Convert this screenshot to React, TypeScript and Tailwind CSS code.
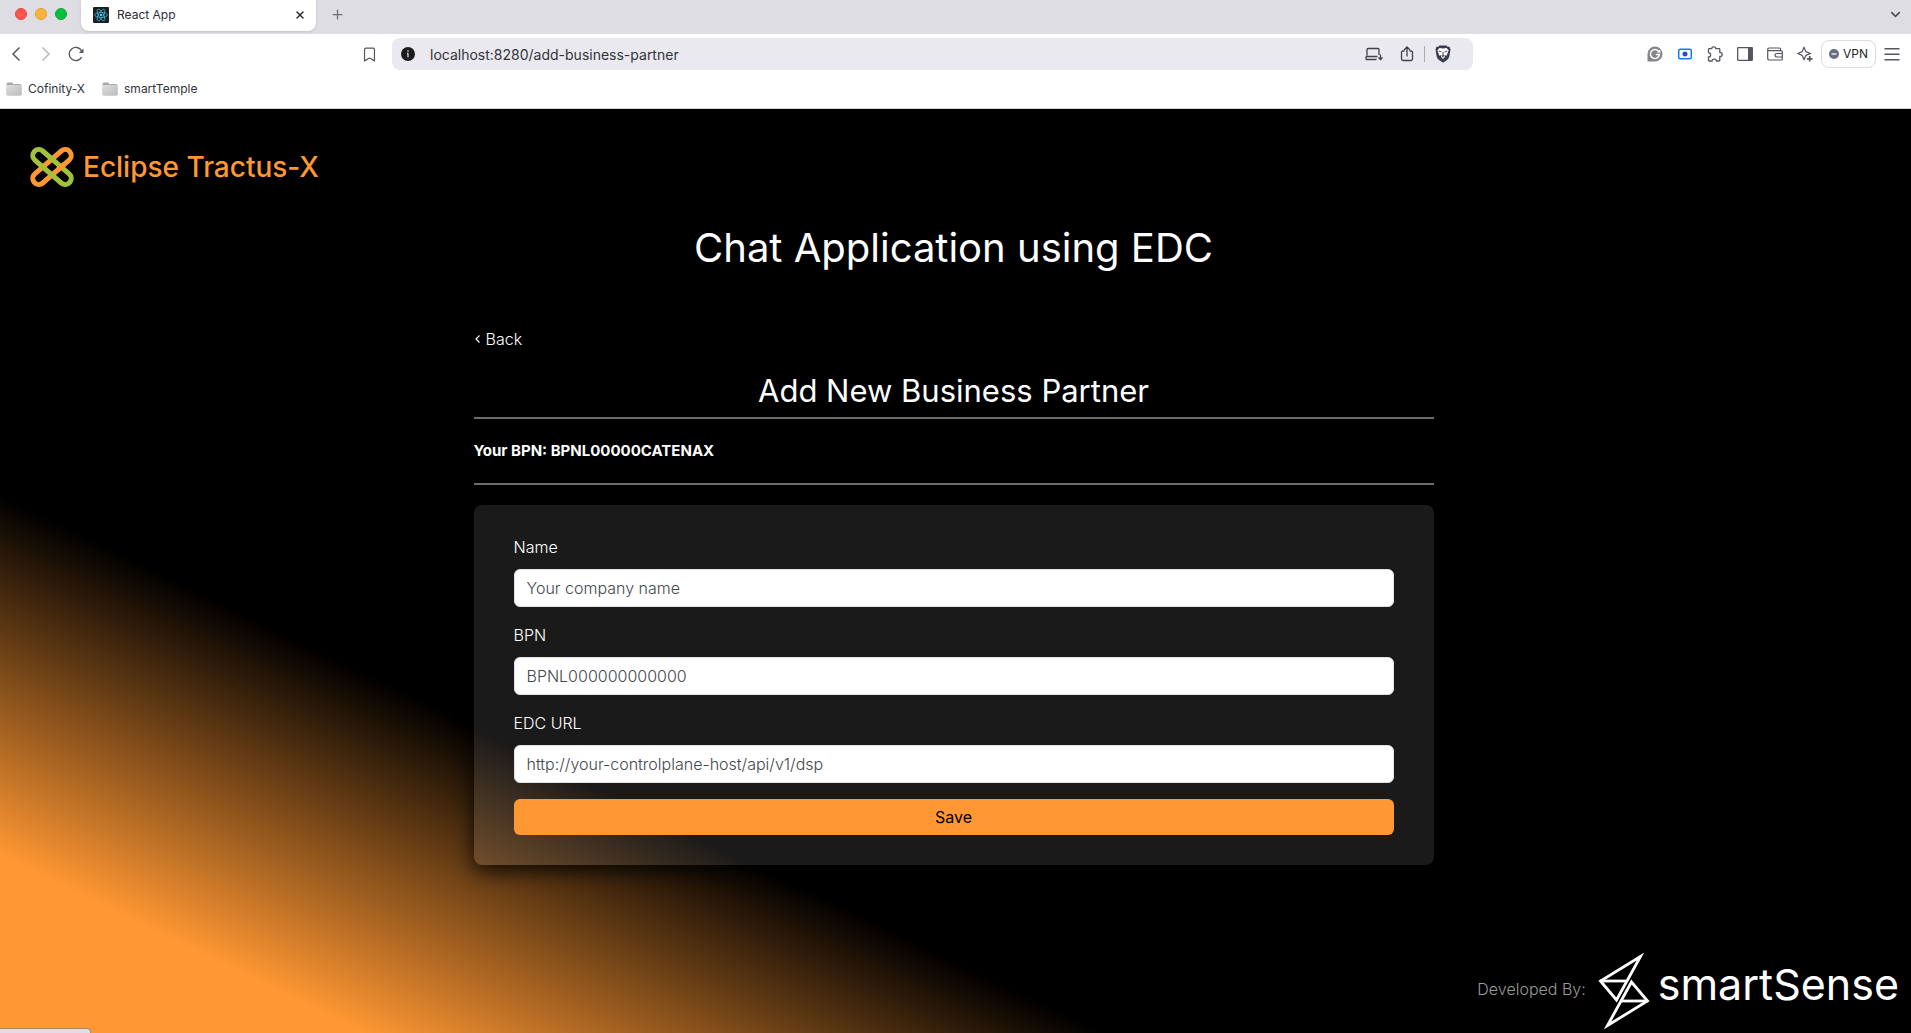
import React from "react";
import { Bookmark, ChevronDown, Plus, X } from "lucide-react";

function ReactFavicon() {
  return (
    <svg width="16" height="16" viewBox="0 0 16 16" aria-hidden="true">
      <rect width="16" height="16" rx="1" fill="#1c1f24" />
      <g fill="none" stroke="#35b4cf" strokeWidth="0.8">
        <ellipse cx="8" cy="8" rx="6.4" ry="2.5" />
        <ellipse cx="8" cy="8" rx="6.4" ry="2.5" transform="rotate(60 8 8)" />
        <ellipse cx="8" cy="8" rx="6.4" ry="2.5" transform="rotate(120 8 8)" />
      </g>
      <circle cx="8" cy="8" r="1.3" fill="#4fd0ea" />
    </svg>
  );
}

function FolderIcon() {
  return (
    <svg width="16" height="14" viewBox="0 0 16 14" aria-hidden="true">
      <defs>
        <linearGradient id="folder" x1="0" y1="0" x2="1" y2="1">
          <stop offset="0" stopColor="#dedede" />
          <stop offset="1" stopColor="#bdbdbd" />
        </linearGradient>
      </defs>
      <path d="M0.5 2 Q0.5 0.5 2 0.5 H6 L7.5 2 H14 Q15.5 2 15.5 3.5 V12 Q15.5 13.5 14 13.5 H2 Q0.5 13.5 0.5 12 Z" fill="#a9a9a9" />
      <path d="M0.5 3 H15.5 V12 Q15.5 13 14.5 13 H1.5 Q0.5 13 0.5 12 Z" fill="url(#folder)" />
    </svg>
  );
}

function TabStrip() {
  return (
    <div className="flex h-[34px] items-start justify-between bg-[#dedde3]">
      <div className="flex items-start">
        <div className="flex h-7 w-[81px] items-center gap-2 pl-[15px]">
          <span className="size-3 rounded-full border border-[#e2463f] bg-[#ff5550]" />
          <span className="size-3 rounded-full border border-[#e09a2c] bg-[#ffb23c]" />
          <span className="size-3 rounded-full border border-[#0ea52f] bg-[#05c03f]" />
        </div>
        <div className="flex h-[31px] w-[235px] items-center rounded-b-lg bg-white pr-2.5 pb-0.5 pl-3 shadow-sm">
          <ReactFavicon />
          <span className="ml-2 flex-1 text-[12px] text-[#2d2d33]">React App</span>
          <button aria-label="Close tab" className="text-[#2d2d33]">
            <X size={12} strokeWidth={3} />
          </button>
        </div>
        <button aria-label="New tab" className="flex h-7 w-[42px] items-center justify-center text-[#6d6d74]">
          <Plus size={15} strokeWidth={2} />
        </button>
      </div>
      <button aria-label="Search tabs" className="flex h-7 w-8 items-center justify-center text-[#4a4a52]">
        <ChevronDown size={15} strokeWidth={2.4} />
      </button>
    </div>
  );
}

function Toolbar() {
  return (
    <div className="flex h-10 items-center text-[#55565f]">
      <div className="flex w-[380px] items-center">
        <button aria-label="Back" className="ml-2">
          <svg width="16" height="16" viewBox="0 0 16 16" fill="none" stroke="currentColor" strokeWidth="1.5">
            <path d="M11.5 1.5 5 8l6.5 6.5" />
          </svg>
        </button>
        <button aria-label="Forward" className="ml-3.5 text-[#b7b7bd]">
          <svg width="16" height="16" viewBox="0 0 16 16" fill="none" stroke="currentColor" strokeWidth="1.5">
            <path d="M4.5 1.5 11 8l-6.5 6.5" />
          </svg>
        </button>
        <button aria-label="Reload" className="ml-3.5">
          <svg width="16" height="16" viewBox="0 0 16 16" fill="none" stroke="currentColor" strokeWidth="1.4">
            <path d="M13.6 11.2A6.6 6.6 0 1 1 13.6 4.800" />
            <path d="M15.5 2.5V7H10.8Z" fill="currentColor" stroke="none" />
          </svg>
        </button>
        <button aria-label="Bookmark this page" className="mr-0.5 ml-auto">
          <Bookmark size={17} strokeWidth={1.7} />
        </button>
      </div>
      <div className="ml-3 flex h-8 w-[1081px] items-center rounded-lg bg-[#eae9ef] pr-[21px] pl-[9px]">
        <svg width="14" height="14" viewBox="0 0 14 14" aria-hidden="true">
          <circle cx="7" cy="7" r="7" fill="#1c1c1f" />
          <path d="M7 6.2V10.5M6 6.5H7.2M7 3.3V4.7" stroke="#d8d8dc" strokeWidth="1.3" />
        </svg>
        <input
          aria-label="Address"
          defaultValue="localhost:8280/add-business-partner"
          className="ml-[15px] min-w-0 flex-1 bg-transparent text-[14px] text-[#333338] outline-none"
        />
        <button aria-label="Install app">
          <svg width="18" height="16" viewBox="0 0 18 16" fill="none" stroke="#3f414b" strokeWidth="1.3">
            <path d="M2 9.5V3.5Q2 2.5 3 2.5H13Q14 2.5 14 3.5V9M1 10.5H12.5M1 13.5H11.5M1 10.5V13.5" />
            <path d="M15.5 8.5V13M13.5 11.5l2 2 2-2" />
          </svg>
        </button>
        <button aria-label="Share" className="ml-4">
          <svg width="16" height="16" viewBox="0 0 16 16" fill="none" stroke="#3f414b" strokeWidth="1.3">
            <path d="M5.5 5H4Q2.500 5 2.500 6.500V13Q2.500 14.500 4 14.500H12Q13.500 14.500 13.500 13V6.500Q13.500 5 12 5H10.500M8 10.500V1.200M5 4l3-3 3 3" />
          </svg>
        </button>
        <span className="mx-[9px] h-4 w-px bg-[#aaaab2]" />
        <button aria-label="Shields">
          <svg width="18" height="18" viewBox="0 0 18 18">
            <path d="M5.500 0.500H12.500L13.700 1.800 15.500 1.700 16.500 4.500 15.300 11.500Q14.800 13.600 13 15L9 17.800 5 15Q3.200 13.600 2.700 11.500L1.500 4.500 2.500 1.700 4.300 1.800Z" fill="#3a3b4d" />
            <path d="M5.500 3 9 3.500 12.500 3 14.700 5.200 13.600 8 12.600 10.800 10.500 10 10.900 12.300 9 13.900 7.100 12.300 7.500 10 5.400 10.800 4.400 8 3.300 5.200Z" fill="#fff" />
            <path d="M4.700 6 7.500 7M13.300 6 10.500 7M9 7V10.300M7.800 10.300H10.200M7.600 12.300 9 11.500 10.400 12.300" stroke="#3a3b4d" strokeWidth="0.9" fill="none" />
          </svg>
        </button>
      </div>
      <div className="ml-auto flex items-center gap-3.5 pr-[11px]">
        <button aria-label="Grammar">
          <svg width="16" height="16" viewBox="0 0 16 16">
            <path d="M0.500 15.500V8A7.500 7.500 0 1 1 8 15.500Z" fill="#85858a" />
            <path d="M11.300 4.900A4.500 4.500 0 1 0 12.400 8.600H8.800M12.600 4V6H10.500" fill="none" stroke="#fff" strokeWidth="1.5" />
          </svg>
        </button>
        <button aria-label="Recorder">
          <svg width="16" height="16" viewBox="0 0 16 16">
            <rect x="1.700" y="3.200" width="12.600" height="9.600" rx="1.500" fill="#fff" stroke="#1478f2" strokeWidth="1.5" />
            <circle cx="8" cy="8" r="2.500" fill="#3a45cf" />
          </svg>
        </button>
        <button aria-label="Extensions">
          <svg width="16" height="16" viewBox="0 0 16 16" fill="none" stroke="currentColor" strokeWidth="1.3" strokeLinejoin="round">
            <path d="M1.500 3.500Q1.500 2.700 2.300 2.700H4.800C4.300 0.200 9.200 0.200 8.700 2.700H12Q12.800 2.700 12.800 3.500V6.500C16 6 16 11 12.800 10.500V14.200Q12.800 15 12 15H9.300C9.500 12.400 5 12.400 5.200 15H2.300Q1.500 15 1.500 14.200V11C4.300 11 4.300 6.600 1.500 6.600Z" />
          </svg>
        </button>
        <button aria-label="Sidebar">
          <svg width="16" height="16" viewBox="0 0 16 16">
            <rect x="0.700" y="1.700" width="14.600" height="12.600" rx="0.500" fill="none" stroke="currentColor" strokeWidth="1.3" />
            <path d="M11 1.500H15.500V14.500H11Z" fill="currentColor" />
          </svg>
        </button>
        <button aria-label="Wallet">
          <svg width="16" height="16" viewBox="0 0 16 16" fill="none" stroke="currentColor" strokeWidth="1.2">
            <path d="M0.700 3.500Q0.700 2 2.200 2H12.500Q13.500 2 13.500 3V4.500M0.700 3.500Q0.700 4.700 2 4.700H14Q15.300 4.700 15.300 6V12.700Q15.300 14 14 14H2.500Q0.700 14 0.700 12.500Z" />
            <path d="M15 7.500H10Q8 7.500 8 9.200T10 11H15" />
          </svg>
        </button>
        <button aria-label="Assistant">
          <svg width="16" height="16" viewBox="0 0 16 16" fill="none" stroke="currentColor" strokeWidth="1.2">
            <path d="M7 1.200 8.800 5.600 13.600 7.500 8.800 9.400 7 13.800 5.200 9.400 0.700 7.500 5.200 5.600Z" strokeLinejoin="round" />
            <path d="M12.700 10V15.600M9.900 12.800H15.500" strokeWidth="1.7" />
          </svg>
        </button>
        <button className="-ml-[6px] flex h-7 w-[55px] items-center justify-center gap-1 rounded-lg border border-[#dcdce0] text-[12px] text-[#26262b]">
          <svg width="10" height="10" viewBox="0 0 10 10">
            <circle cx="5" cy="5" r="5" fill="#686c85" />
            <path d="M2.500 5H7.500" stroke="#fff" strokeWidth="1.3" />
          </svg>
          VPN
        </button>
        <button aria-label="Menu" className="-ml-[6px]">
          <svg width="16" height="16" viewBox="0 0 16 16" stroke="currentColor" strokeWidth="1.4">
            <path d="M0.500 2.700H15.500M0.500 8.200H15.500M0.500 13.700H15.500" />
          </svg>
        </button>
      </div>
    </div>
  );
}

function BookmarkBar() {
  return (
    <div className="flex h-[35px] items-start gap-[17px] border-b border-[#d4d4d6] pt-[5px] pl-1.5 text-[12px] text-[#33333a]">
      <a href="#cofinity" className="flex h-5 items-center gap-1.5"><FolderIcon />Cofinity-X</a>
      <a href="#smarttemple" className="flex h-5 items-center gap-1.5"><FolderIcon />smartTemple</a>
    </div>
  );
}

function TractusLogo() {
  return (
    <svg width="46" height="42" viewBox="0 0 46 42" fill="none" aria-hidden="true">
      <rect x="-6" y="-23.500" width="12" height="47" rx="6" transform="translate(23 21) rotate(49)" stroke="#ff9833" strokeWidth="5" />
      <rect x="-6" y="-23.500" width="12" height="47" rx="6" transform="translate(23 21) rotate(-49)" stroke="#a1c23b" strokeWidth="5" />
      <path d="M28.500 24.100 35.700 17.900" stroke="#ff9833" strokeWidth="5" />
    </svg>
  );
}

function SmartSenseMark() {
  return (
    <svg width="52" height="76" viewBox="0 0 52 76" fill="none" stroke="#fff" strokeWidth="2.8" aria-hidden="true">
      <path d="M42.500 3.500 2.500 28 18.500 47Z" />
      <path d="M2 28H29" />
      <path d="M9.500 72.500 49.500 48 33.500 29Z" />
      <path d="M50 48H23" />
    </svg>
  );
}

type FieldProps = { id: string; label: string; placeholder: string };

function Field({ id, label, placeholder }: FieldProps) {
  return (
    <div className="mb-4">
      <label htmlFor={id} className="mb-2.5 block leading-6 font-light">{label}</label>
      <input
        id={id}
        placeholder={placeholder}
        className="block h-[38px] w-full rounded-md border border-[#dee2e6] bg-white px-3 font-light text-[#212529] placeholder:text-[#43484d]"
      />
    </div>
  );
}

export default function App() {
  return (
    <div className="relative flex min-h-screen flex-col bg-white font-['Inter',sans-serif]">
      <header>
        <TabStrip />
        <Toolbar />
        <BookmarkBar />
      </header>
      <main className="flex flex-1 flex-col bg-[linear-gradient(26deg,#ff9833_9.5%,#000_29%)] pr-1 text-[16px] text-white">
        <div className="flex h-[115px] items-center gap-2 pl-[29px]">
          <TractusLogo />
          <span className="text-[28px] font-medium text-[#ff9833]">Eclipse Tractus-X</span>
        </div>
        <div className="mx-auto w-full max-w-[960px]">
          <h1 className="text-center text-[40px] leading-[48px]">Chat Application using EDC</h1>
          <a href="#back" className="mt-[55px] flex h-6 w-fit items-center gap-1 font-light">
            <svg width="8" height="10" viewBox="0 0 8 10" fill="none" stroke="currentColor" strokeWidth="1.2"><path d="M5.500 1.500 2 5l3.500 3.500" /></svg>
            Back
          </a>
          <h2 className="mt-[21px] border-b-2 border-[#6c6c6c] pb-[7px] text-center text-[31px] leading-[38px]">Add New Business Partner</h2>
          <p className="border-b-2 border-[#6c6c6c] py-5 text-[15px] leading-6 font-bold">Your BPN: BPNL00000CATENAX</p>
          <form className="mt-5 rounded-lg bg-white/10 px-10 py-[30px] shadow-[0_6px_20px_rgba(0,0,0,0.8)]">
            <Field id="name" label="Name" placeholder="Your company name" />
            <Field id="bpn" label="BPN" placeholder="BPNL000000000000" />
            <Field id="edc" label="EDC URL" placeholder="http://your-controlplane-host/api/v1/dsp" />
            <button type="button" className="h-9 w-full rounded-md bg-[#ff9833] text-black">Save</button>
          </form>
        </div>
        <footer className="mt-auto flex items-center justify-end gap-3 pr-2 pb-1">
          <span className="pb-1 font-light text-[#9a9a9a]">Developed By:</span>
          <span className="flex items-start gap-2">
            <SmartSenseMark />
            <span className="text-[43px] leading-[62px]">smartSense</span>
          </span>
        </footer>
      </main>
      <div className="absolute bottom-0 left-0 h-[5px] w-[91px] rounded-tr-sm border-t border-r border-[#a58a74] bg-[#dedde3]" />
    </div>
  );
}
